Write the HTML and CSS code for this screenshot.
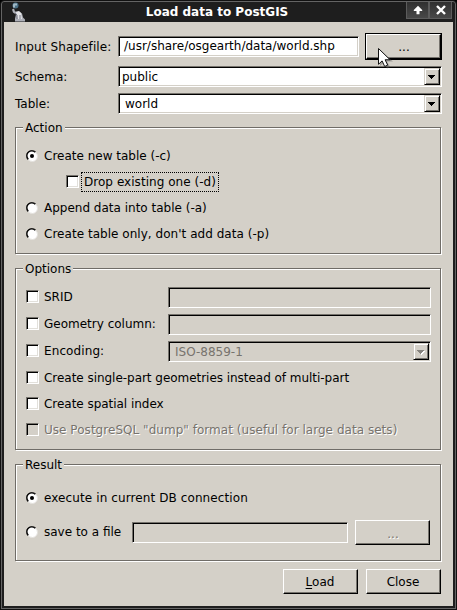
FILE: index.html
```html
<!DOCTYPE html>
<html lang="en">
<head>
<meta charset="utf-8">
<title>Load data to PostGIS</title>
<link rel="stylesheet" href="styles.css">
</head>
<body>
<svg width="0" height="0" class="defs" aria-hidden="true">
  <symbol id="radio" viewBox="0 0 12 12">
    <circle cx="6" cy="6" r="5.5" fill="#fff"/>
    <path d="M2 10A5.5 5.5 0 0 1 10 2" fill="none" stroke="#77736d" stroke-width="1"/>
    <path d="M2.3 9.2A4.6 4.6 0 0 1 9.2 2.3" fill="none" stroke="#000" stroke-width="1.3"/>
    <path d="M10 3A4.6 4.6 0 0 1 3 10" fill="none" stroke="#e4e2de" stroke-width="1"/>
  </symbol>
  <symbol id="down" viewBox="0 0 7 4"><path d="M0 0h7v1h-1v1h-1v1h-1v1h-1v-1h-1v-1h-1v-1h-1z"/></symbol>
</svg>
<div class="window">
  <header class="titlebar">
    <svg class="app-icon" width="16" height="20" viewBox="0 0 16 20">
      <circle cx="4.5" cy="3.5" r="3" fill="#4b7187"/>
      <path d="M3 1.500h3v2H4v2H2v-3z" fill="#a2b9c5"/>
      <path d="M1 7.500l2-1 1 3h4l3 2 1 4 2 2v2H4v-3l1-4-3-2z" fill="#aeb0b8"/>
      <path d="M5 10l3-1 2 2 1 6H7l-1-3z" fill="#e4e4e7"/>
      <path d="M4 11l2 2v4M9 13v4" fill="none" stroke="#777986"/>
    </svg>
    <h1>Load data to PostGIS</h1>
    <div class="window-buttons">
      <span><svg width="10" height="10" viewBox="0 0 10 10"><path d="M5 .8L9.200 5v1H6.500v3.200h-3V6H.8V5z" fill="#fff"/></svg></span>
      <span><svg width="10" height="10" viewBox="0 0 10 10"><path d="M1 1l8 8M9 1L1 9" stroke="#fff" stroke-width="2.4"/></svg></span>
    </div>
  </header>
  <main>
    <div class="form">
      <label class="wider">Input Shapefile:</label>
      <div class="source">
        <div class="field white path">/usr/share/osgearth/data/world.shp</div>
        <div class="default-button"><button class="button dots">...</button></div>
      </div>
      <label>Schema:</label>
      <div class="field white combo">public<i class="drop"><svg width="7" height="4"><use href="#down"/></svg></i></div>
      <label>Table:</label>
      <div class="field white combo table">world<i class="drop"><svg width="7" height="4"><use href="#down"/></svg></i></div>
    </div>

    <section class="group action">
      <h2>Action</h2>
      <div class="row"><svg class="radio"><use href="#radio"/><circle cx="6" cy="6" r="2"/></svg><span>Create new table (-c)</span></div>
      <div class="row nested"><i class="check"></i><span class="focused">Drop existing one (-d)</span></div>
      <div class="row"><svg class="radio"><use href="#radio"/></svg><span>Append data into table (-a)</span></div>
      <div class="row"><svg class="radio"><use href="#radio"/></svg><span class="wide">Create table only, don't add data (-p)</span></div>
    </section>

    <section class="group options">
      <h2>Options</h2>
      <div class="row tall"><i class="check"></i><span class="caption">SRID</span><div class="field"></div></div>
      <div class="row tall"><i class="check"></i><span class="caption">Geometry column:</span><div class="field"></div></div>
      <div class="row tall"><i class="check"></i><span class="caption wider">Encoding:</span><div class="field combo disabled">ISO-8859-1<i class="drop"><svg width="7" height="4"><use href="#down"/></svg></i></div></div>
      <div class="row"><i class="check"></i><span class="narrow">Create single-part geometries instead of multi-part</span></div>
      <div class="row"><i class="check"></i><span class="narrow">Create spatial index</span></div>
      <div class="row"><i class="check off"></i><span class="disabled wide">Use PostgreSQL "dump" format (useful for large data sets)</span></div>
    </section>

    <section class="group result">
      <h2>Result</h2>
      <div class="row"><svg class="radio"><use href="#radio"/><circle cx="6" cy="6" r="2"/></svg><span class="wider">execute in current DB connection</span></div>
      <div class="row save"><svg class="radio"><use href="#radio"/></svg><span class="caption">save to a file</span><div class="field"></div><button class="button dots disabled">...</button></div>
    </section>

    <footer>
      <button class="button"><u>L</u>oad</button>
      <button class="button">Close</button>
    </footer>
  </main>
  <svg class="cursor" width="16" height="22" viewBox="0 0 16 22">
    <path d="M2 2v16l4-3.500 3 6 3-1.500-3-5.500h6z" fill="#555" opacity=".4"/>
    <path d="M.5 .5v15.800l3.600-3.400 2.600 5.600 3-1.400-2.600-5.300h5z" fill="#fff" stroke="#111"/>
  </svg>
</div>
</body>
</html>
```
FILE: styles.css
```css
* { box-sizing: border-box; }
body {
  margin: 0;
  background: #000;
  color: #000;
  font: 12px/16px "DejaVu Sans", sans-serif;
}
.defs { position: absolute; }
.window {
  position: relative;
  width: 457px;
  height: 610px;
  padding: 0 2px 2px;
  border: 1px solid #111;
  border-radius: 4px 4px 0 0;
  background: #1e1e1e;
  box-shadow: inset 0 0 0 1px #646464;
}
.titlebar {
  display: flex;
  align-items: flex-start;
  height: 21px;
  color: #fff;
}
.app-icon { margin: 1px 0 0 8px; }
.titlebar h1 {
  flex: 1;
  margin: 2px 0 0 1px;
  font-size: 12px;
  line-height: 18px;
  text-align: center;
}
.window-buttons { display: flex; margin: 1px 2px 0 0; }
.window-buttons span {
  display: flex;
  align-items: center;
  justify-content: center;
  width: 23px;
  height: 17px;
  border: 1px solid #5c5c5c;
  border-top: 0;
  background: linear-gradient(#303030, #484848);
}
main {
  height: 584px;
  margin: 0 1px;
  padding: 11px 11px 0;
  background: #d4d0c8;
}
.form {
  display: grid;
  grid-template-columns: 103px 324px;
  grid-template-rows: 27px 21px 21px;
  row-gap: 6px;
  align-items: center;
}
.source { display: flex; align-items: center; gap: 6px; }
.source .field { width: 241px; }
.wide { letter-spacing: .035px; }
.wider { letter-spacing: .1px; }
.narrow { letter-spacing: -.035px; }
.field {
  display: block;
  height: 21px;
  padding-left: 4px;
  border: 1px solid;
  border-color: #76736d #fff #fff #76736d;
  box-shadow: inset 1px 1px 0 #000;
  line-height: 19px;
  white-space: nowrap;
}
.white { background: #fff; box-shadow: inset 1px 1px 0 #000, inset -1px -1px 0 #d4d0c8; }
.path { padding-left: 5px; }
.combo { display: flex; justify-content: space-between; padding: 1px 1px 1px 3px; line-height: 18px; }
.combo.table { padding-left: 6px; }
.drop {
  display: flex;
  align-items: center;
  justify-content: center;
  width: 16px;
  height: 17px;
  padding-right: 1px;
  border: 1px solid;
  border-color: #d4d0c8 #000 #000 #d4d0c8;
  background: #d4d0c8;
  box-shadow: inset 1px 1px 0 #fff, inset -1px -1px 0 #76736d;
}
.button {
  width: 75px;
  height: 25px;
  padding: 0 1px 0 0;
  border: 1px solid;
  border-color: #fff #000 #000 #fff;
  background: #d4d0c8;
  box-shadow: inset -1px -1px 0 #76736d;
  color: #000;
  font: inherit;
  text-underline-offset: 2px;
}
.button.dots { padding: 0 0 0 1px; }
.default-button { width: 77px; height: 27px; border: 1px solid #000; }
.group {
  width: 426px;
  border: 1px solid #706d68;
  box-shadow: 1px 1px 0 #fff, inset 1px 1px 0 #fff;
}
.action { height: 127px; margin-top: 13px; }
.options { height: 182px; margin-top: 14px; }
.result { height: 97px; margin-top: 14px; }
.group h2 {
  width: max-content;
  height: 16px;
  margin: -8px 0 7px 7px;
  padding: 0 2px;
  background: #d4d0c8;
  font-size: 12px;
  font-weight: normal;
}
.result h2 { margin-bottom: 12px; }
.row {
  display: flex;
  height: 26px;
  padding-left: 10px;
  line-height: 26px;
  white-space: nowrap;
}
.tall { height: 27px; }
.nested { padding-left: 50px; }
.radio { width: 12px; height: 12px; margin: 7px 6px 0 0; }
.check {
  width: 13px;
  height: 13px;
  margin: 6px 5px 0 0;
  border: 1px solid;
  border-color: #76736d #fff #fff #76736d;
  background: #fff;
  box-shadow: inset 1px 1px 0 #000, inset -1px -1px 0 #e2e0db;
}
.check.off { background: #d4d0c8; box-shadow: inset 1px 1px 0 #000; }
.nested .check { margin-right: 2px; }
.focused {
  height: 20px;
  margin-top: 3px;
  padding: 0 2px;
  border: 1px dotted #000;
  line-height: 18px;
  letter-spacing: .04px;
}
.caption { width: 124px; }
.row .field { width: 263px; margin-top: 3px; }
.row .combo { padding-left: 6px; line-height: 19px; }
.disabled { color: #77736d; text-shadow: 1px 1px 0 #fff; }
.field.disabled { text-shadow: none; }
.disabled .drop { fill: #85827d; }
.disabled .drop svg { filter: drop-shadow(1px 1px 0 #fff); }
.save { margin-top: 8px; }
.save .caption { width: 88px; }
.save .field { width: 216px; }
.save .button { margin: 1px 0 0 7px; }
footer { display: flex; justify-content: flex-end; gap: 8px; margin-top: 8px; padding-right: 1px; }
.cursor { position: absolute; left: 377px; top: 47px; }
```
